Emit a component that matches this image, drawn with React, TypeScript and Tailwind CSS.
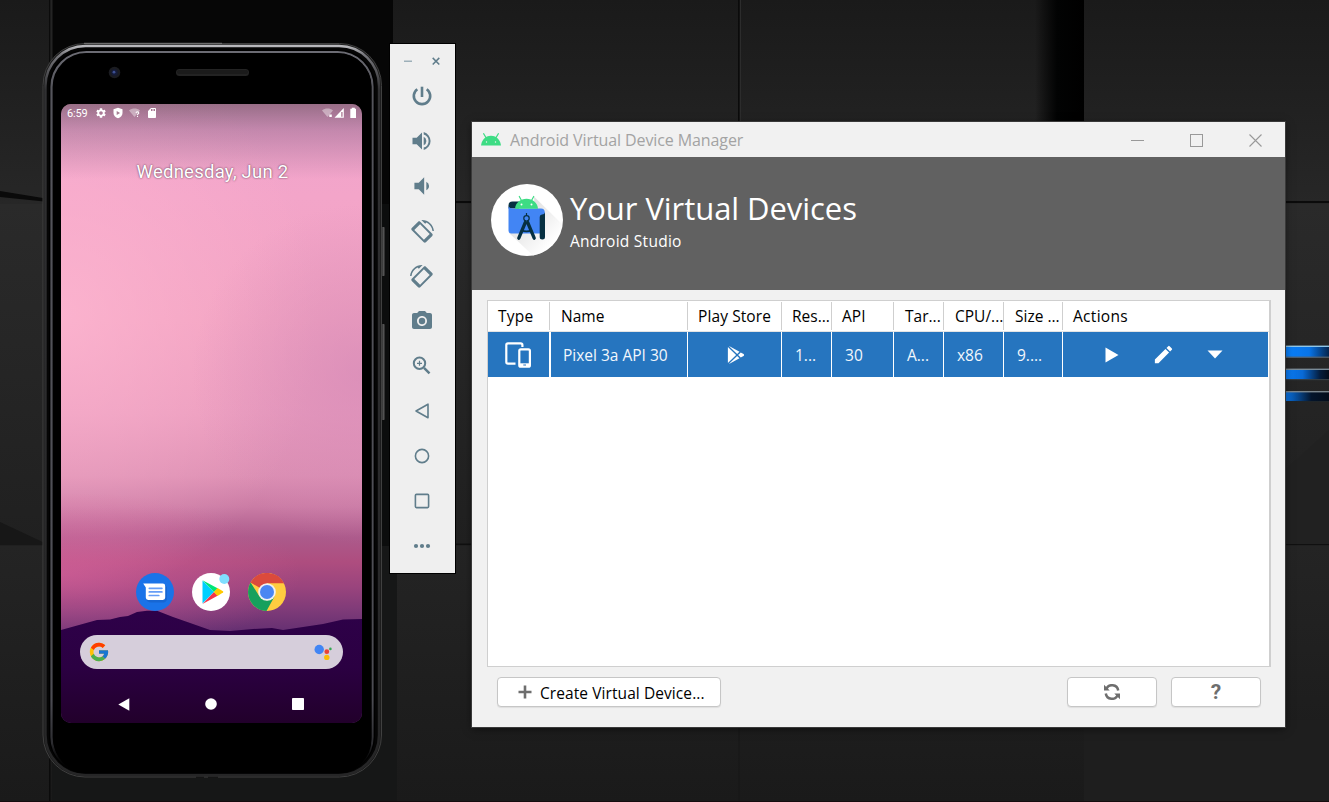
import React from "react";
import { MdCameraAlt, MdVolumeDown, MdSettings, MdSdCard, MdEdit } from "react-icons/md";
import { FcGoogle } from "react-icons/fc";

const uiFont = "font-['Open_Sans','Noto_Sans',sans-serif]";

function Wallpaper() {
  return (
    <svg className="absolute inset-0 h-full w-full" viewBox="0 0 1329 802" preserveAspectRatio="none" aria-hidden="true">
      <defs>
        <linearGradient id="w1" x1="0" x2="0" y1="0" y2="1">
          <stop offset="0" stopColor="#1a1a1a" />
          <stop offset="1" stopColor="#272727" />
        </linearGradient>
        <linearGradient id="w2" x1="0" x2="0" y1="0" y2="1">
          <stop offset="0" stopColor="#2a2a2a" />
          <stop offset="1" stopColor="#202020" />
        </linearGradient>
        <linearGradient id="w3" x1="0" x2="0" y1="0" y2="1">
          <stop offset="0" stopColor="#242424" />
          <stop offset="1" stopColor="#1a1a1a" />
        </linearGradient>
        <linearGradient id="w4" x1="0" x2="1">
          <stop offset="0" stopColor="#000" stopOpacity="0" />
          <stop offset=".45" stopColor="#020303" />
          <stop offset="1" stopColor="#000" />
        </linearGradient>
        <linearGradient id="b1" x1="0" x2="1">
          <stop offset="0" stopColor="#0a80fb" />
          <stop offset=".55" stopColor="#0874e8" />
          <stop offset="1" stopColor="#04244c" />
        </linearGradient>
        <linearGradient id="b2" x1="0" x2="1">
          <stop offset="0" stopColor="#0a7cf5" />
          <stop offset=".4" stopColor="#086ad6" />
          <stop offset=".8" stopColor="#041c3c" />
          <stop offset="1" stopColor="#040d1a" />
        </linearGradient>
        <linearGradient id="b3" x1="0" x2="1">
          <stop offset="0" stopColor="#0a78ee" />
          <stop offset=".6" stopColor="#04152c" />
          <stop offset="1" stopColor="#040d1a" />
        </linearGradient>
      </defs>
      <rect width="1329" height="802" fill="#1c1c1c" />
      <rect width="1329" height="204" fill="url(#w1)" />
      <rect y="204" width="1329" height="342" fill="url(#w2)" />
      <rect y="546" width="1329" height="256" fill="url(#w3)" />
      <rect x="52" width="341" height="204" fill="#060606" />
      <rect x="52" y="204" width="345" height="342" fill="#0c0d0d" />
      <rect x="52" y="546" width="345" height="256" fill="#161717" />
      <rect x="49" width="1.5" height="802" fill="#0b0b0b" />
      <rect x="50.5" width="2" height="200" fill="#242424" />
      <rect x="738" width="1.500" height="130" fill="#0b0b0b" />
      <rect x="740" width="1" height="130" fill="#2c2c2c" />
      <rect x="738.500" y="720" width="1" height="82" fill="#161616" />
      <rect x="1035" width="49" height="130" fill="url(#w4)" />
      <rect x="1084" y="720" width="245" height="82" fill="#1e1e1e" />
      <path d="M0 191L49 199V202L0 197Z" fill="#0a0a0a" />
      <rect x="455" y="201" width="874" height="2" fill="#0b0b0b" />
      <rect x="455" y="543.500" width="874" height="1.500" fill="#101010" />
      <path d="M0 522L49 545H0Z" fill="#171717" />
      <path d="M1285 470 L1329 430 V544 H1285Z" fill="#212121" />
      <g>
        <rect x="1285" y="346" width="44" height="11.5" fill="url(#b1)" />
        <rect x="1285" y="345.6" width="44" height="1.4" fill="#8fc6e8" />
        <rect x="1285" y="356.6" width="44" height="1.2" fill="#59636b" />
        <rect x="1285" y="369" width="44" height="11" fill="url(#b2)" />
        <rect x="1285" y="368.6" width="44" height="1.4" fill="#7a8b97" />
        <rect x="1285" y="379" width="44" height="1.2" fill="#343d44" />
        <rect x="1285" y="391.5" width="44" height="10" fill="url(#b3)" />
        <rect x="1285" y="391" width="44" height="1.4" fill="#7a858c" />
        <rect x="1285" y="401" width="44" height="1" fill="#20262a" />
      </g>
      <rect y="801" width="1329" height="1" fill="#150c0e" />
    </svg>
  );
}

function DeviceSkin() {
  return (
    <svg className="absolute inset-0" width="344" height="736" viewBox="42 42 344 736" aria-hidden="true">
      <defs>
        <linearGradient id="rim" x1="0" x2="0" y1="0" y2="1">
          <stop offset="0" stopColor="#b9b9bd" />
          <stop offset=".012" stopColor="#77777c" />
          <stop offset=".06" stopColor="#303032" />
          <stop offset="1" stopColor="#262627" />
        </linearGradient>
        <linearGradient id="inner" x1="0" x2="0" y1="0" y2="1">
          <stop offset="0" stopColor="#6c6c74" />
          <stop offset=".05" stopColor="#55555c" />
          <stop offset=".9" stopColor="#4c4c53" />
          <stop offset=".96" stopColor="#2c2c30" />
          <stop offset="1" stopColor="#000" stopOpacity="0" />
        </linearGradient>
        <linearGradient id="key" x1="0" x2="1">
          <stop offset="0" stopColor="#111" />
          <stop offset=".6" stopColor="#555" />
          <stop offset="1" stopColor="#222" />
        </linearGradient>
      </defs>
      <rect x="381" y="227" width="4" height="49" rx="1" fill="url(#key)" />
      <rect x="381" y="324" width="4" height="96" rx="1" fill="url(#key)" />
      <rect x="43" y="43.5" width="338.5" height="733.5" rx="42" fill="#1a1a1a" stroke="#404040" strokeWidth="1" />
      <rect x="45.5" y="46" width="333.5" height="729" rx="40" fill="#050505" stroke="url(#rim)" strokeWidth="2.4" />
      <rect x="49" y="49.5" width="326" height="724" rx="37" fill="#000" />
      <rect x="51.5" y="52" width="321" height="720" rx="35" fill="#000" stroke="url(#inner)" strokeWidth="2.2" />
      <rect x="53.500" y="53.5" width="318" height="719" rx="33" fill="#000" />
      <path d="M84 43.3H222" stroke="#777" strokeWidth="1" />
      <path d="M196 777.3H204M208 777.3H218" stroke="#111" strokeWidth="1" />
      <circle cx="114.5" cy="72.5" r="5.8" fill="#1b1c21" />
      <circle cx="114.5" cy="72.5" r="3.2" fill="#151b38" />
      <circle cx="114" cy="72.2" r="1.4" fill="#3c4f92" />
      <rect x="176" y="69" width="73" height="7" rx="3.5" fill="#232323" />
      <rect x="177" y="70" width="71" height="4" rx="2" fill="#1b1b1b" />
    </svg>
  );
}

function Landscape() {
  return (
    <svg className="absolute inset-0" width="301" height="619" viewBox="0 0 301 619" aria-hidden="true">
      <defs>
        <linearGradient id="sky" x1="0" x2="0" y1="0" y2="1">
          <stop offset="0" stopColor="#f0a3cd" />
          <stop offset=".15" stopColor="#f3a5c9" />
          <stop offset=".35" stopColor="#f1a2c1" />
          <stop offset=".5" stopColor="#e99bbd" />
          <stop offset=".6" stopColor="#dc8fb3" />
          <stop offset=".65" stopColor="#cb7ca5" />
          <stop offset=".7" stopColor="#ac5a8b" />
          <stop offset=".74" stopColor="#ae4d7f" />
          <stop offset=".78" stopColor="#9a447d" />
          <stop offset=".82" stopColor="#7d3a78" />
          <stop offset=".86" stopColor="#5f2d70" />
        </linearGradient>
        <radialGradient id="glow" gradientUnits="userSpaceOnUse" cx="0" cy="210" r="260" gradientTransform="translate(0 -20) scale(1 1.1)">
          <stop offset="0" stopColor="#ffb9d3" stopOpacity=".7" />
          <stop offset="1" stopColor="#ffb4cf" stopOpacity="0" />
        </radialGradient>
        <radialGradient id="mauve" gradientUnits="userSpaceOnUse" cx="301" cy="270" r="170">
          <stop offset="0" stopColor="#d489b7" stopOpacity=".65" />
          <stop offset="1" stopColor="#d489b7" stopOpacity="0" />
        </radialGradient>
        <radialGradient id="rose" gradientUnits="userSpaceOnUse" cx="0" cy="470" r="240" gradientTransform="translate(0 310) scale(1 .34)">
          <stop offset="0" stopColor="#d8609a" stopOpacity=".65" />
          <stop offset="1" stopColor="#d8609a" stopOpacity="0" />
        </radialGradient>
        <linearGradient id="scrim" x1="0" x2="0" y1="0" y2="1">
          <stop offset="0" stopColor="#2c2c30" stopOpacity=".45" />
          <stop offset=".35" stopColor="#3c3450" stopOpacity=".25" />
          <stop offset="1" stopColor="#3c3450" stopOpacity="0" />
        </linearGradient>
        <linearGradient id="hills" x1="0" x2="0" y1="0" y2="1">
          <stop offset="0" stopColor="#2e0149" />
          <stop offset=".5" stopColor="#2b0042" />
          <stop offset="1" stopColor="#22002b" />
        </linearGradient>
      </defs>
      <rect width="301" height="619" fill="url(#sky)" />
      <rect width="301" height="619" fill="url(#glow)" />
      <rect width="301" height="619" fill="url(#mauve)" />
      <rect width="301" height="619" fill="url(#rose)" />
      <rect width="301" height="75" fill="url(#scrim)" />
      <path
        d="M0 526L36 516L49 515.5L59 513L67 512L76 508L86 506.7H96L112 513L132 520L149 526L169 527L192 525L211 524L222 526L262 520L282 515.5L301 515V619H0Z"
        fill="url(#hills)"
      />
    </svg>
  );
}

function StatusBar() {
  return (
    <div className="flex h-[18px] items-center pl-[6px] pr-[5px] text-white">
      <span className="w-[28px] pt-px text-[11px] leading-none tracking-[-0.2px]">6:59</span>
      <MdSettings size={12} />
      <svg className="ml-[5px]" width="12" height="12" viewBox="0 0 11 12">
        <path d="M5.5 .7L10 2.3V6C10 8.7 8.2 10.5 5.5 11.3C2.8 10.5 1 8.7 1 6V2.3Z" fill="#fff" />
        <path d="M4.2 3.9L7.6 6L4.2 8.1Z" fill="#a57d92" />
      </svg>
      <svg className="ml-[5px]" width="12" height="12" viewBox="0 0 12 12">
        <path d="M0 3.4C3.3 .8 7.8 .8 11 3.4L5.5 10Z" fill="#fff" opacity=".4" />
        <path d="M7.1 5.9C7.1 4.3 9.8 4.3 9.8 5.9C9.8 6.9 8.5 6.9 8.5 8M8.5 8.8V9.9" fill="none" stroke="#fff" strokeWidth="1.1" />
      </svg>
      <MdSdCard className="ml-[5px]" size={12} />
      <svg className="ml-auto" width="11" height="12" viewBox="0 0 11 12">
        <path d="M0 3.4C3.3 .8 7.8 .8 11 3.4L5.5 10Z" fill="#fff" opacity=".4" />
        <path d="M7.3 7.6H9.8V10.1H7.3Z" fill="#fff" />
      </svg>
      <svg className="ml-[1px]" width="11" height="12" viewBox="0 0 11 12">
        <path d="M.5 10.800L9.800 1V10.800Z" fill="#fff" />
        <path d="M7.200 5H8.600V9.800H7.200Z" fill="#b08099" />
      </svg>
      <svg className="ml-[5px]" width="7" height="12" viewBox="0 0 7 12">
        <path d="M1.800 .8H4.800V1.800H6V11H.3V1.800H1.800Z" fill="#fff" />
      </svg>
    </div>
  );
}

function MessagesIcon() {
  return (
    <svg width="38" height="38" viewBox="0 0 38 38">
      <circle cx="19" cy="19" r="19" fill="#1a73e8" />
      <path d="M10 26.5Q12 30 16 29.500H28Q31.500 28.500 31 24V14L29 12V26H12Z" fill="#1761c9" opacity=".7" />
      <path d="M7.2 10.6H26.8Q29.2 10.6 29.2 13V24.6Q29.2 27 26.8 27H12.2Q9.8 27 9.8 24.6V14.4Z" fill="#fff" />
      <path d="M13.3 15.3H25.9M13.3 18.9H25.9M13.3 22.5H22.8" stroke="#669df6" strokeWidth="1.7" strokeLinecap="round" />
    </svg>
  );
}

function PlayStoreIcon() {
  return (
    <svg className="overflow-visible" width="38" height="38" viewBox="0 0 38 38">
      <circle cx="19" cy="19" r="19" fill="#fff" />
      <path d="M10.5 7.5V30.5L22 19Z" fill="#00d0ff" />
      <path d="M10.5 7.3L26 15.4L22 19Z" fill="#00e676" />
      <path d="M10.5 30.9L26 22.6L22 19Z" fill="#f6354b" />
      <path d="M25.5 15L31 18.2Q31.6 19 31 19.6L25.5 22.9L21.8 19Z" fill="#ffc900" />
      <circle cx="32.3" cy="6" r="5" fill="#80deff" />
    </svg>
  );
}

function ChromeIcon() {
  return (
    <svg width="38" height="38" viewBox="0 0 38 38">
      <circle cx="19" cy="19" r="19" fill="#ffcd40" />
      <path d="M19 10.3H36A19 19 0 0 0 2.6 9.5L19 19Z" fill="#db4a3c" />
      <path d="M2.6 9.5A19 19 0 0 0 18.5 38L26.5 23.5L19 27.6L11.5 23.4Z" fill="#16a05d" />
      <circle cx="19" cy="19" r="8.8" fill="#f1f1f1" />
      <circle cx="19" cy="19" r="7" fill="#4a86f2" />
    </svg>
  );
}

function Phone() {
  return (
    <div className="absolute left-[42px] top-[42px] h-[736px] w-[344px]">
      <DeviceSkin />
      <div className="absolute left-[19px] top-[62px] h-[619px] w-[301px] overflow-hidden rounded-[10px]">
        <Landscape />
        <div className="relative flex h-full flex-col font-[Roboto,sans-serif]">
          <StatusBar />
          <div className="mt-[38px] pl-[2px] text-center text-[18.500px] leading-[24px] tracking-[0.25px] text-white [text-shadow:0_0_2px_rgba(60,30,50,0.9)]">
            Wednesday, Jun 2
          </div>
          <div className="mt-auto flex justify-center gap-[18px] pb-[24px] pr-[1px]">
            <MessagesIcon />
            <PlayStoreIcon />
            <ChromeIcon />
          </div>
          <div className="ml-[19px] flex h-[34px] w-[263px] items-center justify-between rounded-full bg-[#d6cedb] pl-[8px] pr-[10px]">
            <FcGoogle size={22} />
            <svg width="20" height="18" viewBox="0 0 20 18">
              <circle cx="6.2" cy="6.5" r="4.7" fill="#4285f4" />
              <circle cx="13.8" cy="8.7" r="2.4" fill="#ea4335" />
              <circle cx="13.8" cy="14.4" r="2.7" fill="#fbbc05" />
              <circle cx="17.4" cy="5.9" r="1.3" fill="#34a853" />
            </svg>
          </div>
          <div className="mt-[29px] flex h-[25px] items-start justify-between pb-[19px] pl-[57px] pr-[58px]">
            <svg width="12" height="13" viewBox="0 0 12 13">
              <path d="M11.3 .3V12.8L.3 6.6Z" fill="#fff" />
            </svg>
            <svg width="12" height="12" viewBox="0 0 12 12">
              <circle cx="6" cy="6" r="5.8" fill="#fff" />
            </svg>
            <svg width="12" height="12" viewBox="0 0 12 12">
              <rect width="12" height="12" rx=".8" fill="#fff" />
            </svg>
          </div>
        </div>
      </div>
    </div>
  );
}

function RotateIcon({ flip = false }: { flip?: boolean }) {
  return (
    <svg className={flip ? "mt-[2px] -scale-x-100" : "mt-[2px]"} width="24" height="24" viewBox="0 0 24 24" fill="currentColor">
      <path d="M16.48 2.52c3.27 1.55 5.61 4.72 5.97 8.48h1.5C23.44 4.84 18.29 0 12 0l-.66.03 3.81 3.81 1.33-1.32z" />
      <path
        fillRule="evenodd"
        d="M10.23 1.75c-.59-.59-1.54-.59-2.12 0L1.75 8.11c-.59.59-.59 1.54 0 2.12l12.02 12.02c.59.59 1.54.59 2.12 0l6.36-6.36c.59-.59.59-1.54 0-2.12L10.23 1.75zM10.1 4.3L19.7 13.9L13.9 19.7L4.3 10.1Z"
      />
    </svg>
  );
}

function EmulatorToolbar() {
  const icons: React.ReactNode[] = [
    <svg width="24" height="24" viewBox="0 0 24 24" fill="none" stroke="currentColor" strokeWidth="2.600">
      <path d="M12 2.700V13" />
      <path d="M7.300 5.200A8.200 8.200 0 1 0 16.700 5.200" />
    </svg>,
    <svg width="24" height="24" viewBox="0 0 24 24" fill="currentColor">
      <path d="M2.500 8.700V15.300H6.700L12 20.500V3.500L6.700 8.700Z" />
      <path d="M13.700 7.700A4.800 4.800 0 0 1 13.700 16.300Z" />
      <path d="M13.700 3.100V5.400A6.900 6.900 0 0 1 13.700 18.600V20.900A9.200 9.200 0 0 0 13.700 3.100Z" />
    </svg>,
    <MdVolumeDown size={26} />,
    <RotateIcon />,
    <RotateIcon flip />,
    <MdCameraAlt size={24} />,
    <svg width="24" height="24" viewBox="0 0 24 24" fill="none" stroke="currentColor">
      <circle cx="9.500" cy="9.300" r="5.700" strokeWidth="2" />
      <path d="M9.500 6.800V11.800M7 9.300H12" strokeWidth="1.200" />
      <path d="M14 13.800L19.500 19.300" strokeWidth="2.400" />
    </svg>,
    <svg width="24" height="24" viewBox="0 0 24 24">
      <path d="M18 5.2V18.8L6 12Z" fill="none" stroke="currentColor" strokeWidth="1.6" strokeLinejoin="round" />
    </svg>,
    <svg width="24" height="24" viewBox="0 0 24 24">
      <circle cx="12" cy="12" r="6.6" fill="none" stroke="currentColor" strokeWidth="1.6" />
    </svg>,
    <svg width="24" height="24" viewBox="0 0 24 24">
      <rect x="5.4" y="5.4" width="13.2" height="13.2" rx="1" fill="none" stroke="currentColor" strokeWidth="1.6" />
    </svg>,
    <svg width="24" height="24" viewBox="0 0 24 24" fill="currentColor">
      <circle cx="6" cy="12" r="2.1" />
      <circle cx="12" cy="12" r="2.1" />
      <circle cx="18" cy="12" r="2.1" />
    </svg>,
  ];
  return (
    <div className="absolute left-[389px] top-[43px] flex h-[531px] w-[67px] flex-col border border-black bg-[#efefef] pr-[2px] text-[#607d8b]">
      <div className="flex h-[29px] items-end justify-center gap-[20px] pl-[1px]">
        <svg width="8" height="17" viewBox="0 0 8 17">
          <rect y="4.5" width="8" height="1.5" fill="#9db0b9" />
        </svg>
        <svg width="8" height="17" viewBox="0 0 8 17">
          <path d="M.7 1.9L7.3 8.5M7.3 1.9L.7 8.5" stroke="currentColor" strokeWidth="1.5" />
        </svg>
      </div>
      {icons.map((icon, i) => (
        <div key={i} className="flex h-[45px] items-center justify-center">
          {icon}
        </div>
      ))}
    </div>
  );
}

function AndroidHead({ className }: { className?: string }) {
  return (
    <svg className={className} width="20" height="13" viewBox="0 0 20 13">
      <path d="M0 12.5C.6 7.600 4 2.800 10 2.800S19.400 7.600 20 12.5Z" fill="#3ddc84" />
      <path d="M2.6 .6L5 4.6M17.400 .6L15 4.600" stroke="#3ddc84" strokeWidth="1.100" strokeLinecap="round" />
      <circle cx="5.5" cy="9" r=".7" fill="#f1f1f1" />
      <circle cx="14.500" cy="9" r=".7" fill="#f1f1f1" />
    </svg>
  );
}

function StudioLogo() {
  return (
    <svg className="mt-px" width="72" height="72" viewBox="0 0 72 72">
      <defs>
        <linearGradient id="shade" x1="0" y1="0" x2="1" y2="1">
          <stop offset=".2" stopColor="#d2d2d2" />
          <stop offset=".8" stopColor="#fff" />
        </linearGradient>
      </defs>
      <circle cx="36" cy="36" r="36" fill="#fff" />
      <path d="M43 12.500L71 40A36 36 0 0 1 42 71.5L18 49L45 48Z" fill="url(#shade)" opacity=".75" />
      <path d="M21.500 17.500H28V24.500H17.500V21.500Q17.500 17.500 21.500 17.500Z" fill="#073042" />
      <path d="M17.500 22.500Q19 24.600 21.500 24.600H50Q53.800 24.600 53.800 28.500V49.500H20.500Q17.500 49.500 17.500 46.500Z" fill="#4285f4" />
      <path d="M24 24.800C24.500 18.500 29.500 14.700 35.500 14.700S46.500 18.500 47 24.800Z" fill="#3ddc84" />
      <path d="M28.300 12.500L30.500 16.500M42.700 12.500L40.500 16.500" stroke="#3ddc84" strokeWidth="1.200" strokeLinecap="round" />
      <circle cx="30.500" cy="20.500" r="1" fill="#fff" />
      <circle cx="40.500" cy="20.500" r="1" fill="#fff" />
      <path d="M48.700 33Q48.700 30.500 51 30.500Q54 30.300 54 27.500V53Q54 55.500 51.300 55.500Q48.700 55.500 48.700 53Z" fill="#073042" />
      <path d="M35.500 29V31.500" stroke="#073042" strokeWidth="1.200" />
      <circle cx="35.500" cy="34.300" r="2.700" fill="none" stroke="#073042" strokeWidth="1.200" />
      <path d="M34.300 38.500L27.800 54.200M36.700 38.500L43.200 54.200" stroke="#073042" strokeWidth="3.300" strokeLinecap="round" />
      <path d="M30.500 46.300Q35.500 48.300 40.500 46.300" fill="none" stroke="#073042" strokeWidth="1.800" />
    </svg>
  );
}

const headCell = "my-px flex items-center overflow-hidden whitespace-nowrap border-r border-[#cfcfcf] pt-[2px]";
const bodyCell = "flex items-center overflow-hidden whitespace-nowrap border-r border-white pl-[13px] pt-[2px]";

function DeviceTable() {
  return (
    <div className="ml-[15px] mt-[10px] h-[367px] w-[784px] border border-r-2 border-[#cfcfcf] bg-white text-[15.500px]">
      <div className="grid h-[31px] grid-cols-[62px_138px_94px_50px_62px_50px_60px_59px_1fr] border-b border-[#e4e4e4] text-black">
        <div className={`${headCell} pl-[10px] tracking-[0.2px]`}>Type</div>
        <div className={`${headCell} pl-[11px]`}>Name</div>
        <div className={`${headCell} pl-[10px] tracking-[0.1px]`}>Play Store</div>
        <div className={`${headCell} pl-[10px]`}>Res...</div>
        <div className={`${headCell} pl-[10px]`}>API</div>
        <div className={`${headCell} pl-[11px]`}>Tar...</div>
        <div className={`${headCell} pl-[11px]`}>CPU/...</div>
        <div className={`${headCell} pl-[11px]`}>Size ...</div>
        <div className="my-px flex items-center pl-[10px] pt-[2px] tracking-[0.3px]">Actions</div>
      </div>
      <div className="mr-[1px] grid h-[45px] grid-cols-[62px_138px_94px_50px_62px_50px_60px_59px_1fr] bg-[#2675bf] text-[#f2f7fc]">
        <div className="flex items-center pl-[17px] pt-px">
          <svg width="27" height="27" viewBox="0 0 27 27" fill="none" stroke="#fff" strokeWidth="2.200">
            <path d="M10.500 21.600H3Q1.300 21.600 1.300 20V3Q1.300 1.300 3 1.300H15.700Q17.400 1.300 17.400 3V5" />
            <rect x="14.300" y="7.300" width="10.600" height="17.400" rx="1.500" />
            <path d="M14.300 22.800H25" strokeWidth="3" />
            <path d="M18.300 23H21" stroke="#2675bf" strokeWidth="1" />
          </svg>
        </div>
        <div className="-ml-px flex items-center whitespace-nowrap border-l-2 border-r border-white pl-[12px] pt-[2px]">Pixel 3a API 30</div>
        <div className="flex items-center justify-center border-r border-white pl-[2px]">
          <svg width="20" height="20" viewBox="0 0 512 512" fill="#fff">
            <path d="M48 59.490v393a4.330 4.330 0 0 0 7.370 3.070L260 256 55.370 56.420A4.330 4.330 0 0 0 48 59.490zM345.800 174L89.220 32.640l-.16-.09c-4.420-2.400-8.620 3.580-5 7.060l201.130 192.320zM84.080 472.390c-3.640 3.480.56 9.460 5 7.060l.16-.09L345.800 338l-60.610-57.950zM449.380 231l-71.650-39.460L310.360 256l67.370 64.430L449.380 281c19.490-10.770 19.490-39.230 0-50z" />
          </svg>
        </div>
        <div className={bodyCell}>1...</div>
        <div className={`${bodyCell} tracking-[0.2px]`}>30</div>
        <div className={bodyCell}>A...</div>
        <div className={bodyCell}>x86</div>
        <div className={bodyCell}>9....</div>
        <div className="flex items-center pl-[42px]">
          <svg className="mt-px" width="14" height="16" viewBox="0 0 14 16">
            <path d="M.5 .5V15.500L13.500 8Z" fill="#fff" />
          </svg>
          <MdEdit className="ml-[33px]" size={23} color="#fff" />
          <svg className="ml-[32px]" width="16" height="9" viewBox="0 0 16 9">
            <path d="M.5 .5H15.500L8 8.500Z" fill="#fff" />
          </svg>
        </div>
      </div>
    </div>
  );
}

const buttonBase =
  "flex h-[30px] items-center rounded-[4px] border border-[#c6c6c6] bg-white shadow-[0_1px_1px_rgba(0,0,0,0.08)]";

function ManagerWindow() {
  return (
    <div
      className={`absolute left-[472px] top-[122px] flex h-[605px] w-[813px] flex-col bg-[#f1f1f1] shadow-[0_0_0_1px_#3a3a3a,0_2px_8px_rgba(0,0,0,0.5)] ${uiFont}`}
    >
      <div className="flex h-[35px] items-center pl-[9px] text-[#999]">
        <AndroidHead />
        <span className="ml-[9px] mt-px whitespace-nowrap text-[16px] leading-none tracking-[-0.1px] text-[#a3a3a3]">Android Virtual Device Manager</span>
        <div className="ml-auto flex items-center pr-[23px] pt-px">
          <svg width="13" height="13" viewBox="0 0 13 13">
            <path d="M0 6.500H13" stroke="currentColor" />
          </svg>
          <svg className="ml-[46px]" width="13" height="13" viewBox="0 0 13 13">
            <rect x=".5" y=".5" width="12" height="12" fill="none" stroke="currentColor" />
          </svg>
          <svg className="ml-[46px]" width="13" height="13" viewBox="0 0 13 13">
            <path d="M.5 .5L12.500 12.500M12.500 .5L.5 12.500" stroke="currentColor" strokeWidth="1.100" />
          </svg>
        </div>
      </div>
      <div className="flex h-[133px] items-start bg-[#616161] pl-[19px] pt-[26px] text-white">
        <StudioLogo />
        <div className="ml-[7px] flex flex-col">
          <span className="whitespace-nowrap text-[31px] font-normal leading-[50px] tracking-[-0.06px]">Your Virtual Devices</span>
          <span className="whitespace-nowrap text-[15.500px] leading-[16px] tracking-[0.25px]">Android Studio</span>
        </div>
      </div>
      <DeviceTable />
      <div className="flex pl-[25px] pr-[24px] pt-[10px]">
        <button className={`${buttonBase} w-[224px] pl-[20px]`}>
          <svg width="14" height="14" viewBox="0 0 14 14" className="mb-px">
            <path d="M7 .5V13.500M.5 7H13.500" stroke="#6e6e6e" strokeWidth="2.600" />
          </svg>
          <span className="ml-[8px] mt-[3px] whitespace-nowrap text-[15.500px] leading-none tracking-[0.08px] text-black">Create Virtual Device...</span>
        </button>
        <button className={`${buttonBase} ml-auto w-[90px] justify-center`}>
          <svg width="16" height="16" viewBox="0 0 16 16" fill="none" stroke="#6e6e6e" strokeWidth="2.500">
            <path d="M2.200 5.400A6.200 6.200 0 0 1 14.200 6.500" />
            <path d="M13.800 10.600A6.200 6.200 0 0 1 1.800 9.500" />
            <path d="M0 .8V6.500H5.700ZM16 15.200V9.500H10.300Z" fill="#6e6e6e" stroke="none" />
          </svg>
        </button>
        <button className={`${buttonBase} ml-[14px] w-[90px] justify-center pt-px font-[Roboto,sans-serif] text-[21px] font-bold leading-none text-[#6e6e6e]`}>
          ?
        </button>
      </div>
    </div>
  );
}

export default function App() {
  return (
    <div className="relative h-[802px] w-[1329px] overflow-hidden bg-[#1c1c1c]">
      <Wallpaper />
      <Phone />
      <EmulatorToolbar />
      <ManagerWindow />
    </div>
  );
}
